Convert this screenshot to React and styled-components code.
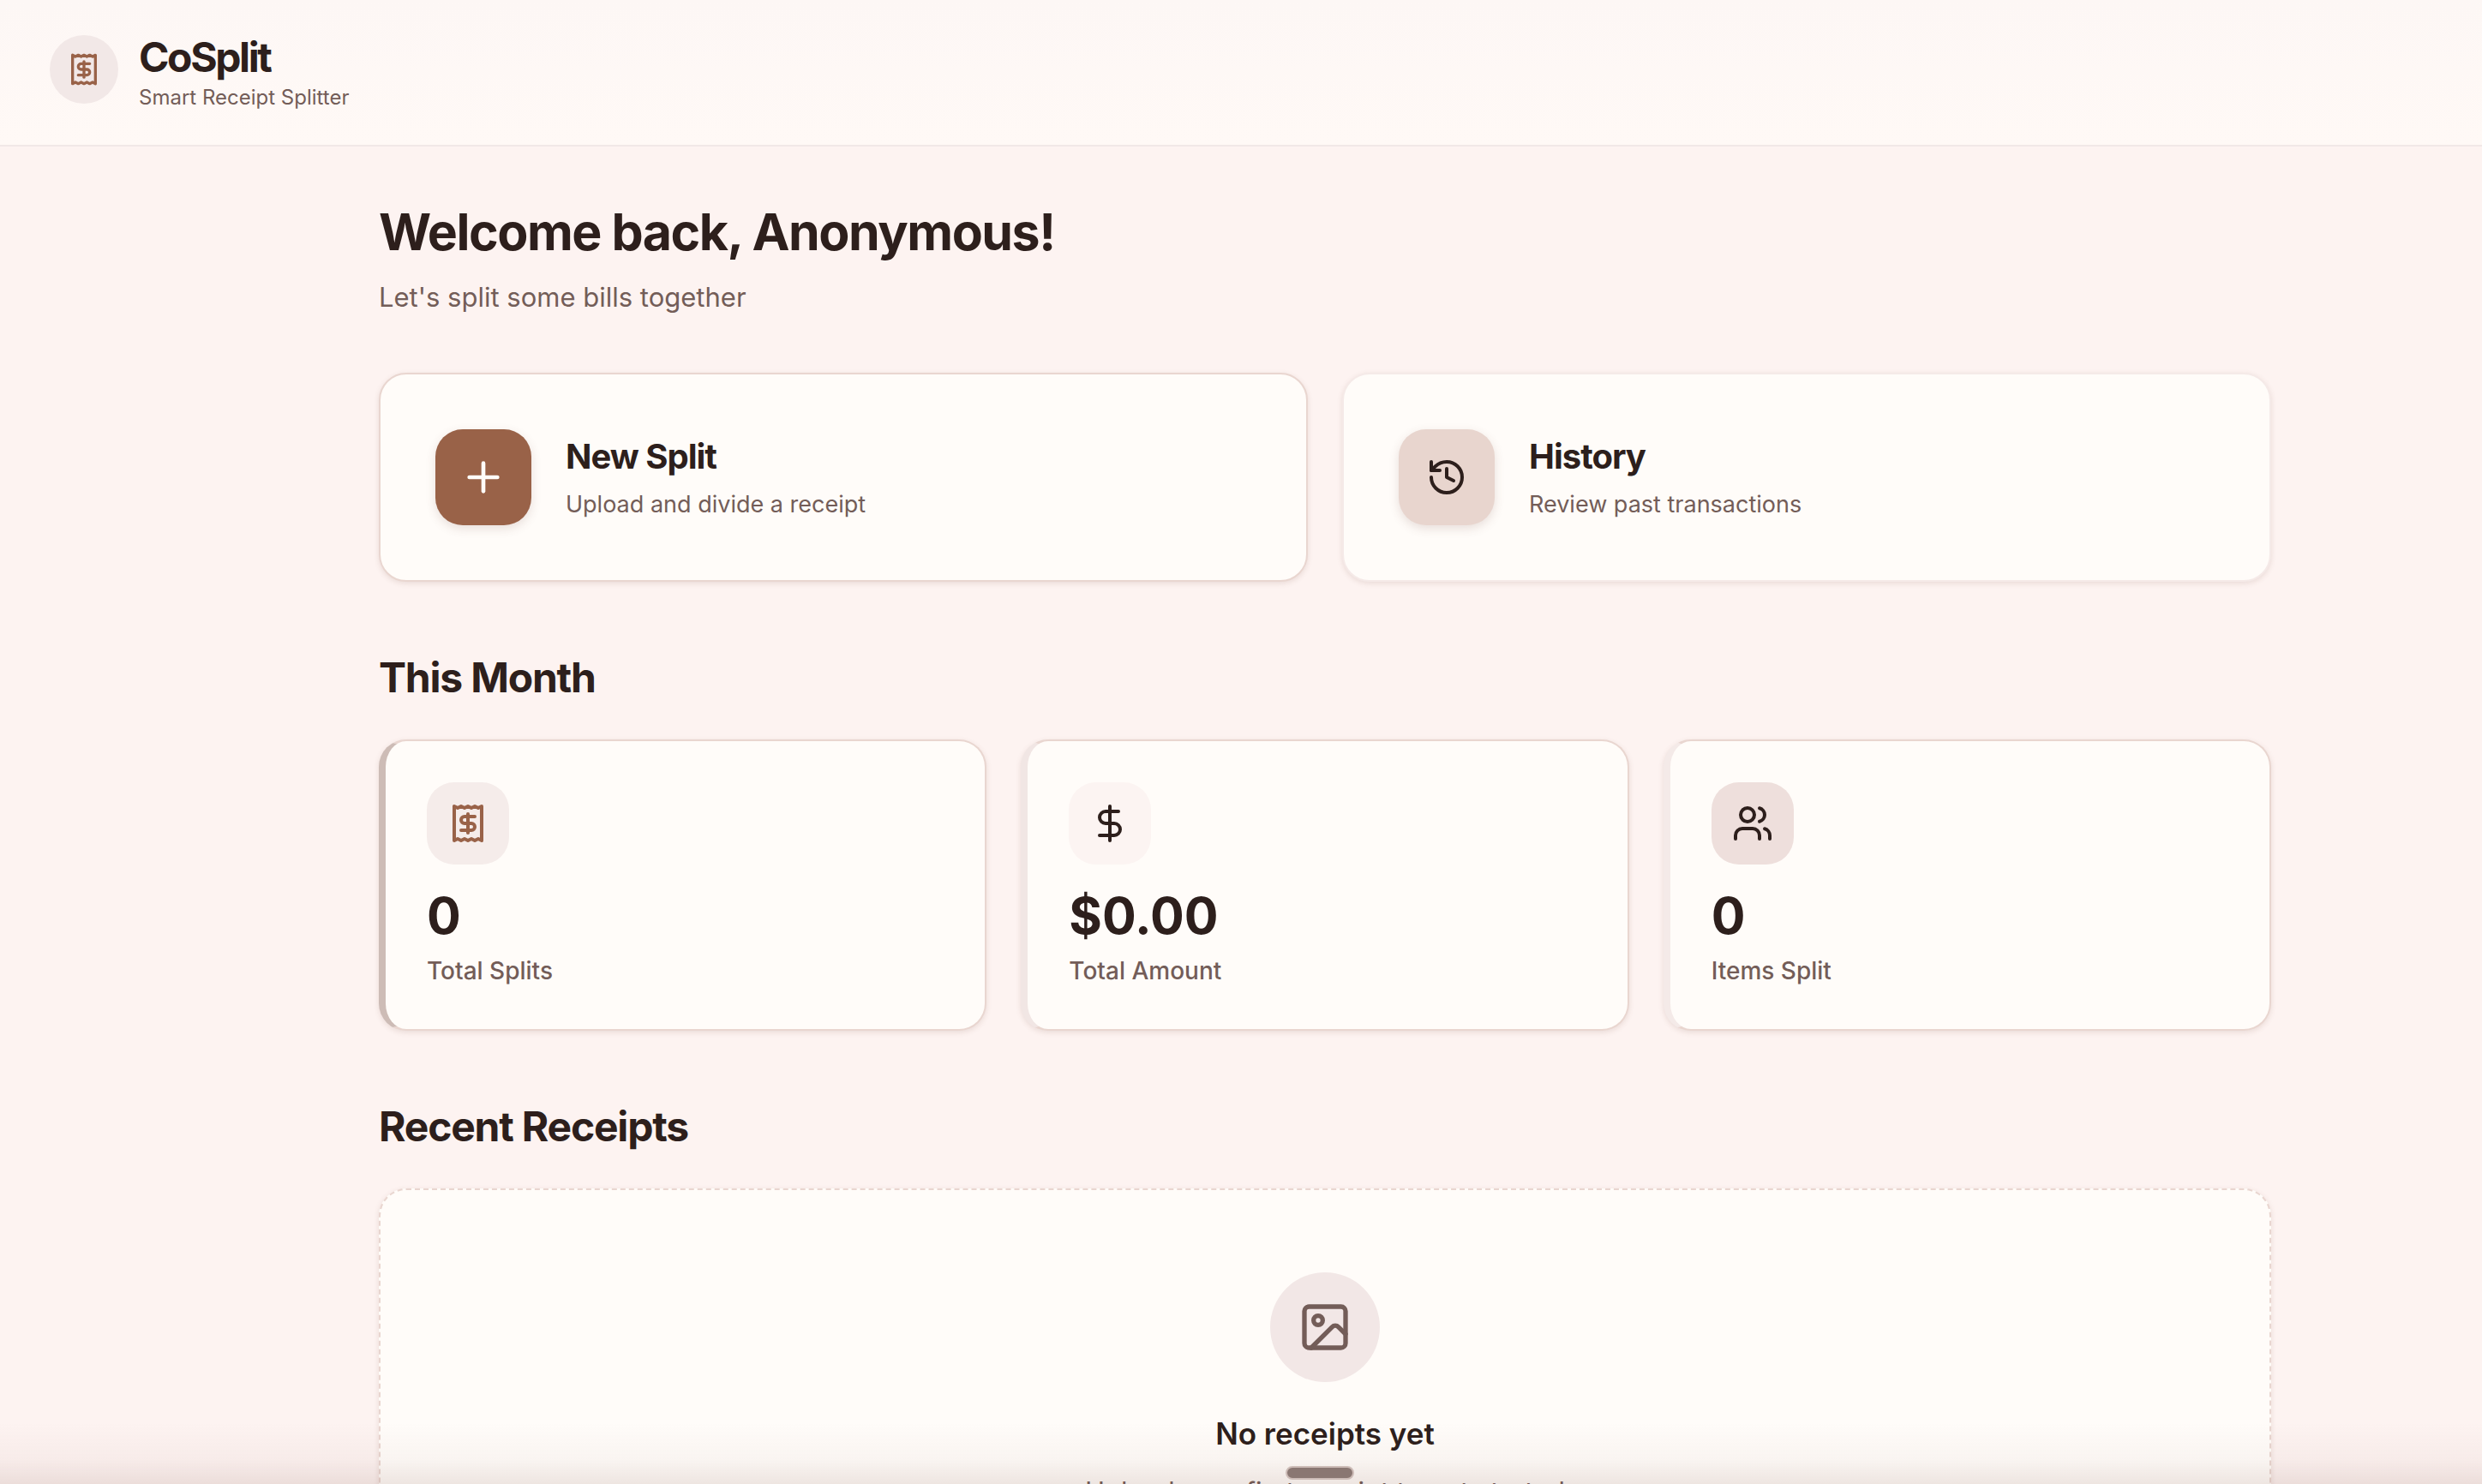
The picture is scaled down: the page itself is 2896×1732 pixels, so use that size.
import styled, { createGlobalStyle } from 'styled-components';
import { Receipt, Plus, History, DollarSign, Users, Image } from 'lucide-react';

const GlobalStyle = createGlobalStyle`
    * {
        box-sizing: border-box;
    }

    body {
        margin: 0;
        min-height: 100vh;
        background-color: #fdf3f1;
        color: #2d1f1c;
        font-family: Inter, sans-serif;
    }

    h1, h2, h3, p {
        margin: 0;
    }
`

const Header = styled.header`
    display: flex;
    align-items: flex-start;
    gap: 24px;
    padding: 41px 58px 34px;
    border-bottom: 2px solid #f1e8e7;
    background: linear-gradient(to bottom, #fdf7f5, #fff9f6);
`

const Logo = styled.div`
    display: flex;
    align-items: center;
    justify-content: center;
    width: 80px;
    height: 80px;
    border-radius: 50%;
    background-color: #f2e8e7;
    color: #996248;
`

const Brand = styled.p`
    font-size: 48px;
    font-weight: 700;
    line-height: 52px;
    letter-spacing: -0.05em;
`

const Tagline = styled.p`
    font-size: 24px;
    line-height: 42px;
    color: #735d58;
`

const Main = styled.main`
    padding-left: 196px;
`

const Container = styled.div`
    display: flex;
    flex-direction: column;
    gap: 80px;
    max-width: 2304px;
    margin: 0 auto;
    padding: 64px 48px;
`

const Section = styled.section`
    display: flex;
    flex-direction: column;
    gap: ${props => props.$gap || '40px'};
`

const Intro = styled.div`
    display: flex;
    flex-direction: column;
    gap: 16px;
`

const Welcome = styled.h1`
    font-size: 59px;
    font-weight: 700;
    line-height: 72px;
    letter-spacing: -0.025em;
`

const Subtitle = styled.p`
    font-size: 31px;
    line-height: 48px;
    color: #735d58;
`

const Heading = styled.h2`
    font-size: 48px;
    font-weight: 700;
    line-height: 64px;
    letter-spacing: -0.025em;
`

const Grid = styled.div`
    display: grid;
    grid-template-columns: repeat(${props => props.$columns}, 1fr);
    gap: 40px;
`

const ActionCard = styled.button`
    display: flex;
    align-items: center;
    gap: 40px;
    padding: 64px;
    border: 2px solid ${props => props.$border};
    border-radius: 32px;
    background-color: #fffcf9;
    box-shadow: 0 2px 6px rgba(115, 70, 60, 0.14);
    color: inherit;
    font-family: inherit;
    text-align: left;
    cursor: pointer;
`

const ActionIcon = styled.span`
    display: flex;
    align-items: center;
    justify-content: center;
    width: 112px;
    height: 112px;
    border-radius: 32px;
    background-color: ${props => props.$background};
    color: ${props => props.$color};
    box-shadow: 0 4px 12px rgba(115, 70, 60, 0.16);
`

const ActionText = styled.span`
    display: flex;
    flex-direction: column;
    gap: 8px;
`

const ActionTitle = styled.span`
    font-size: 40px;
    font-weight: 700;
    line-height: 56px;
    letter-spacing: -0.025em;
`

const ActionNote = styled.span`
    font-size: 27px;
    line-height: 40px;
    color: #735d58;
`

const StatCard = styled.div`
    display: flex;
    flex-direction: column;
    padding: 48px;
    border: 2px solid #e9d6d0;
    border-left: 8px solid ${props => props.$accent};
    border-radius: 32px;
    background-color: #fffcf9;
    box-shadow: 0 2px 6px rgba(115, 70, 60, 0.14);
`

const StatIcon = styled.div`
    display: flex;
    align-items: center;
    justify-content: center;
    width: 96px;
    height: 96px;
    margin-bottom: 24px;
    border-radius: 32px;
    background-color: ${props => props.$background};
    color: ${props => props.$color};
`

const StatValue = styled.p`
    font-size: 59px;
    font-weight: 700;
    line-height: 72px;
`

const StatLabel = styled.p`
    margin-top: 8px;
    font-size: 28px;
    font-weight: 500;
    line-height: 40px;
    color: #735d58;
`

const EmptyCard = styled.div`
    display: flex;
    flex-direction: column;
    align-items: center;
    padding: 96px 48px;
    border: 2px dashed #e9d6d0;
    border-radius: 32px;
    background-color: #fffcf9;
    box-shadow: 0 2px 6px rgba(115, 70, 60, 0.14);
`

const EmptyIcon = styled.div`
    display: flex;
    align-items: center;
    justify-content: center;
    width: 128px;
    height: 128px;
    margin-bottom: 32px;
    border-radius: 50%;
    background-color: #f2e7e6;
    color: #735d58;
`

const EmptyTitle = styled.h3`
    margin-bottom: 16px;
    font-size: 35px;
    font-weight: 600;
    line-height: 56px;
`

const Dock = styled.nav`
    position: fixed;
    right: 0;
    bottom: 0;
    left: 0;
    display: flex;
    justify-content: center;
    height: 72px;
    padding: 51px 0 0 184px;
    background: linear-gradient(to bottom, rgba(115, 70, 60, 0), rgba(115, 70, 60, 0.04) 60%, rgba(115, 70, 60, 0.12));
`

const Handle = styled.button`
    width: 80px;
    height: 16px;
    padding: 0;
    border: 2px solid #cdbcb7;
    border-radius: 8px;
    background-color: #8a7772;
    cursor: pointer;
`

const stats = [
    { value: '0', label: 'Total Splits', Icon: Receipt, accent: '#cdbcb6', background: '#f5ecea', color: '#996248' },
    { value: '$0.00', label: 'Total Amount', Icon: DollarSign, accent: '#f1e6e4', background: '#fcf4f2', color: '#2d1f1c' },
    { value: '0', label: 'Items Split', Icon: Users, accent: '#f4eae8', background: '#eedfdc', color: '#2d1f1c' },
]

const App = () => {
    return (
        <>
            <GlobalStyle />
            <Header>
                <Logo><Receipt size={40} /></Logo>
                <div>
                    <Brand>CoSplit</Brand>
                    <Tagline>Smart Receipt Splitter</Tagline>
                </div>
            </Header>
            <Main>
                <Container>
                    <Section $gap="64px">
                        <Intro>
                            <Welcome>Welcome back, Anonymous!</Welcome>
                            <Subtitle>Let's split some bills together</Subtitle>
                        </Intro>
                        <Grid $columns={2}>
                            <ActionCard type="button" $border="#e9d6d0">
                                <ActionIcon $background="#996248" $color="#fffcf9"><Plus size={56} /></ActionIcon>
                                <ActionText>
                                    <ActionTitle>New Split</ActionTitle>
                                    <ActionNote>Upload and divide a receipt</ActionNote>
                                </ActionText>
                            </ActionCard>
                            <ActionCard type="button" $border="#f5eae8">
                                <ActionIcon $background="#e8d5ce" $color="#2d1f1c"><History size={48} /></ActionIcon>
                                <ActionText>
                                    <ActionTitle>History</ActionTitle>
                                    <ActionNote>Review past transactions</ActionNote>
                                </ActionText>
                            </ActionCard>
                        </Grid>
                    </Section>
                    <Section>
                        <Heading>This Month</Heading>
                        <Grid $columns={3}>
                            {stats.map(({ value, label, Icon, accent, background, color }) => (
                                <StatCard key={label} $accent={accent}>
                                    <StatIcon $background={background} $color={color}><Icon size={48} /></StatIcon>
                                    <StatValue>{value}</StatValue>
                                    <StatLabel>{label}</StatLabel>
                                </StatCard>
                            ))}
                        </Grid>
                    </Section>
                    <Section>
                        <Heading>Recent Receipts</Heading>
                        <EmptyCard>
                            <EmptyIcon><Image size={64} /></EmptyIcon>
                            <EmptyTitle>No receipts yet</EmptyTitle>
                            <Subtitle>Upload your first receipt to get started</Subtitle>
                        </EmptyCard>
                    </Section>
                </Container>
            </Main>
            <Dock>
                <Handle type="button" aria-label="Open menu" />
            </Dock>
        </>
    );
}

export default App;
